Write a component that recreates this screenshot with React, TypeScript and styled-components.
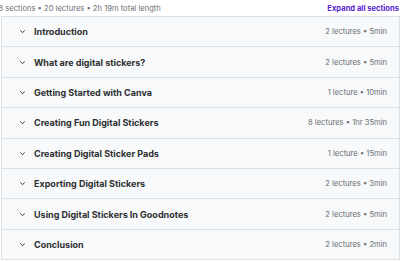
import { FC } from 'react'
import styled, { createGlobalStyle } from 'styled-components'

const GlobalStyle = createGlobalStyle`
	html, body {
		margin: 0;
		padding: 0;
		background: #ffffff;
		font-family: Inter, 'Liberation Sans', sans-serif;
		-webkit-font-smoothing: antialiased;
	}
`

const Wrapper = styled.div`
	width: 400px;
	height: 261px;
	overflow: hidden;
`

const Header = styled.div`
	display: flex;
	align-items: center;
	justify-content: space-between;
	height: 16px;
	margin-left: -1.5px;
	padding-right: 1px;
	.summary {
		color: #6a6f73;
		font-size: 7.6px;
	}
	.expand {
		color: #5624d0;
		font-size: 7.6px;
		font-weight: 700;
	}
`

const Sections = styled.div`
	margin-left: 1px;
	width: 397px;
	border: 1px solid #dce1e5;
	border-bottom: none;
`

const Row = styled.div`
	display: flex;
	align-items: center;
	height: 29.4px;
	padding: 0 12px 0 17px;
	background: #f7f9fa;
	border-bottom: 1px solid #dce1e5;
	.chevron {
		flex: none;
		width: 7px;
		height: 7px;
		margin-right: 8px;
		color: #2d2f31;
	}
	.title {
		flex: 1;
		color: #2d2f31;
		font-size: 9px;
		font-weight: 700;
	}
	.meta {
		color: #6a6f73;
		font-size: 7.6px;
	}
`

const sections = [
	{ title: 'Introduction', meta: '2 lectures • 5min' },
	{ title: 'What are digital stickers?', meta: '2 lectures • 5min' },
	{ title: 'Getting Started with Canva', meta: '1 lecture • 10min' },
	{ title: 'Creating Fun Digital Stickers', meta: '8 lectures • 1hr 35min' },
	{ title: 'Creating Digital Sticker Pads', meta: '1 lecture • 15min' },
	{ title: 'Exporting Digital Stickers', meta: '2 lectures • 3min' },
	{ title: 'Using Digital Stickers In Goodnotes', meta: '2 lectures • 5min' },
	{ title: 'Conclusion', meta: '2 lectures • 2min' },
]

const Chevron: FC = () => (
	<svg className="chevron" viewBox="0 0 8 8" fill="none">
		<path d="M1.8 3.2L4 5.3L6.2 3.2" stroke="currentColor" strokeWidth="1.1" strokeLinecap="round" strokeLinejoin="round" />
	</svg>
)

export default function App() {
	return (
		<Wrapper>
			<GlobalStyle />
			<Header>
				<span className="summary">8 sections • 20 lectures • 2h 19m total length</span>
				<span className="expand">Expand all sections</span>
			</Header>
			<Sections>
				{sections.map((s) => (
					<Row key={s.title}>
						<Chevron />
						<span className="title">{s.title}</span>
						<span className="meta">{s.meta}</span>
					</Row>
				))}
			</Sections>
		</Wrapper>
	)
}
